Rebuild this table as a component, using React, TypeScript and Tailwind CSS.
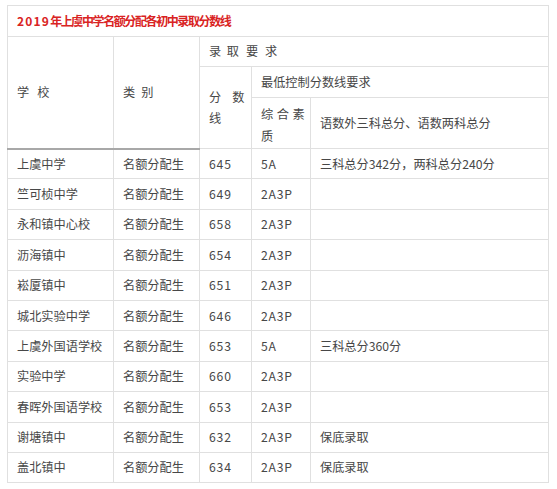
import React from "react";

const rows: [string, string, string, string, string][] = [
  ["上虞中学", "名额分配生", "645", "5A", "三科总分342分，两科总分240分"],
  ["竺可桢中学", "名额分配生", "649", "2A3P", ""],
  ["永和镇中心校", "名额分配生", "658", "2A3P", ""],
  ["沥海镇中", "名额分配生", "654", "2A3P", ""],
  ["崧厦镇中", "名额分配生", "651", "2A3P", ""],
  ["城北实验中学", "名额分配生", "646", "2A3P", ""],
  ["上虞外国语学校", "名额分配生", "653", "5A", "三科总分360分"],
  ["实验中学", "名额分配生", "660", "2A3P", ""],
  ["春晖外国语学校", "名额分配生", "653", "2A3P", ""],
  ["谢塘镇中", "名额分配生", "632", "2A3P", "保底录取"],
  ["盖北镇中", "名额分配生", "634", "2A3P", "保底录取"],
];

const base = "border border-[#e0e0e0] pl-[9px] pr-[4px] align-middle text-left";
const cell = `${base} font-normal`;

export default function App() {
  return (
    <div
      className="w-[557px] h-[489px] bg-white pt-[5px] pl-[7px] text-[#474747] text-[12.2px]"
      style={{ fontFamily: '"Noto Sans CJK SC", "Noto Sans", sans-serif' }}
    >
      <table className="table-fixed border-collapse w-[541px] border border-[#e6e6e6]">
        <colgroup>
          <col className="w-[106px]" />
          <col className="w-[86px]" />
          <col className="w-[52px]" />
          <col className="w-[59px]" />
          <col className="w-[238px]" />
        </colgroup>
        <tbody>
          <tr className="h-[31px]">
            <td colSpan={5} className={`${base} font-bold text-[12px] text-[#d92323]`}>
              <span className="tracking-[1.2px]">2019</span>
              <span className="tracking-[-1.4px]">年上虞中学名额分配各初中录取分数线</span>
            </td>
          </tr>
          <tr className="h-[30px]">
            <td rowSpan={3} className={`${cell} border-b-2 border-b-[#a8a8a8]`}>
              <span>学</span>
              <span className="ml-[8px]">校</span>
            </td>
            <td rowSpan={3} className={`${cell} border-b-2 border-b-[#a8a8a8]`}>
              <span>类</span>
              <span className="ml-[6px]">别</span>
            </td>
            <td colSpan={3} className={cell}>
              <span>录</span>
              <span className="ml-[5.5px]">取</span>
              <span className="ml-[7px]">要</span>
              <span className="ml-[7px]">求</span>
            </td>
          </tr>
          <tr className="h-[31px]">
            <td rowSpan={2} className={`${cell} leading-[21px]`}>
              <span>分</span>
              <span className="ml-[11px]">数</span>
              <br />
              <span>线</span>
            </td>
            <td colSpan={2} className={cell}>
              最低控制分数线要求
            </td>
          </tr>
          <tr className="h-[51px]">
            <td className={`${cell} leading-[22px]`}>
              <div className="pt-[3px]">
                <span>综</span>
                <span className="ml-[3.5px]">合</span>
                <span className="ml-[3.5px]">素</span>
                <br />
                <span>质</span>
              </div>
            </td>
            <td className={cell}>语数外三科总分、语数两科总分</td>
          </tr>
          {rows.map((r, i) => (
            <tr key={i} className="h-[30.4px]">
              <td className={cell}>{r[0]}</td>
              <td className={cell}>{r[1]}</td>
              <td className={`${cell} tracking-[0.8px]`}>{r[2]}</td>
              <td className={`${cell} tracking-[0.8px]`}>{r[3]}</td>
              <td className={cell}>{r[4]}</td>
            </tr>
          ))}
        </tbody>
      </table>
    </div>
  );
}
